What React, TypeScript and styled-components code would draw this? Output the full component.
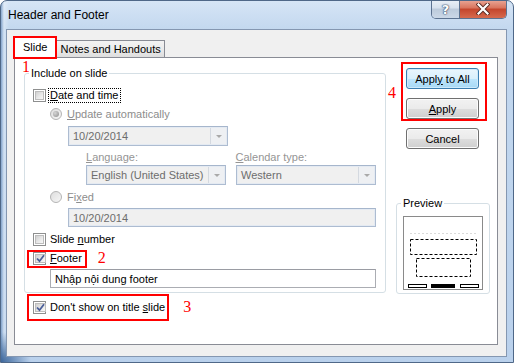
import React from 'react';
import styled, { createGlobalStyle } from 'styled-components';

const GlobalStyle = createGlobalStyle`
  html, body {
    margin: 0;
    padding: 0;
    background: #ffffff;
  }
  body {
    font-family: "Liberation Sans", Arial, sans-serif;
    font-size: 11px;
    color: #000;
  }
  * {
    box-sizing: border-box;
  }
`;

const Window = styled.div`
  width: 514px;
  height: 363px;
  display: flex;
  flex-direction: column;
  border: 1px solid #4f6888;
  border-radius: 7px 7px 0 0;
  overflow: hidden;
  background:
    radial-gradient(circle at 0 100%, #3d679c 0, rgba(61, 103, 156, 0) 30px),
    linear-gradient(90deg, rgba(90, 130, 180, 0.6) 0, rgba(255, 255, 255, 0.3) 3px, rgba(255, 255, 255, 0) 8px),
    linear-gradient(180deg, #d6e5f6 0, #c3d8ef 28px, #bad1ec 100%);
`;

const TitleBar = styled.div`
  height: 28px;
  display: flex;
  align-items: flex-start;
`;

const Title = styled.div`
  flex: 1;
  padding-left: 7px;
  line-height: 28px;
  font-size: 12px;
  color: #000;
`;

const CaptionGroup = styled.div`
  display: flex;
  height: 19px;
  margin-top: -1px;
  margin-right: 6px;
  border: 1px solid #5c7290;
  border-top: none;
  border-radius: 0 0 5px 5px;
  overflow: hidden;
`;

const HelpButton = styled.div`
  width: 28px;
  display: flex;
  align-items: center;
  justify-content: center;
  border-right: 1px solid #5c7290;
  background: linear-gradient(180deg, #eaf0f7 0, #d7e1ed 45%, #bccadb 50%, #cbd8e7 100%);
  font: bold 13px "DejaVu Sans", sans-serif;
  color: #ffffff;
  text-shadow: 0 0 1px #3a4e6d, 0 0 1px #3a4e6d, 0 0 2px #3a4e6d;
`;

const CloseButton = styled.div`
  width: 46px;
  display: flex;
  align-items: center;
  justify-content: center;
  background: linear-gradient(180deg, #eaa898 0, #d9735c 45%, #c4452c 50%, #d66a4e 100%);
`;

const Client = styled.div`
  flex: 1;
  display: flex;
  flex-direction: column;
  margin: 0 6px 5px 5px;
  padding: 7px 8px 11px 7px;
  background: #f0f0f0;
  border: 1px solid #8497b1;
`;

const TabStrip = styled.div`
  height: 20px;
  display: flex;
  align-items: flex-end;
`;

const Tab = styled.div<{ $active?: boolean; $marked?: boolean }>`
  position: relative;
  z-index: ${(p) => (p.$active ? 2 : 1)};
  height: ${(p) => (p.$active ? 21 : 17)}px;
  margin-bottom: ${(p) => (p.$active ? -1 : 0)}px;
  padding: ${(p) => (p.$active ? '3px 8px 0 8px' : '2px 3px 0 4px')};
  border: 1px solid #898c95;
  border-bottom: none;
  border-left-width: ${(p) => (p.$active ? 1 : 0)}px;
  background: ${(p) => (p.$active ? '#ffffff' : 'linear-gradient(180deg, #f3f3f3 0, #ebebeb 50%, #dedede 100%)')};
  outline: ${(p) => (p.$marked ? '2px solid #ff0000' : 'none')};
  outline-offset: -1px;
  white-space: nowrap;
`;

const Panel = styled.div`
  position: relative;
  flex: 1;
  display: flex;
  background: #ffffff;
  border: 1px solid #898c95;
`;

const LeftCol = styled.div`
  width: 362px;
  margin-left: 9px;
  padding-top: 15px;
  display: flex;
  flex-direction: column;
`;

const RightCol = styled.div`
  flex: 1;
  padding-top: 4px;
  display: flex;
  flex-direction: column;
  align-items: flex-start;
`;

const Group = styled.div`
  position: relative;
  border: 1px solid #d5dfe5;
  border-radius: 3px;
  padding: 14px 0 4px 8px;
`;

const Legend = styled.div`
  position: absolute;
  top: -8px;
  left: 4px;
  padding: 0 2px;
  line-height: 14px;
  background: #ffffff;
`;

const Row = styled.div<{ $mt?: number; $ml?: number }>`
  display: flex;
  align-items: center;
  gap: 3px;
  height: 14px;
  margin-top: ${(p) => p.$mt ?? 0}px;
  margin-left: ${(p) => p.$ml ?? 0}px;
`;

const Label = styled.span<{ $disabled?: boolean; $focus?: boolean }>`
  color: ${(p) => (p.$disabled ? '#8d8d8d' : '#000000')};
  line-height: 13px;
  padding: 0 1px;
  outline: ${(p) => (p.$focus ? '1px dotted #000' : 'none')};
  white-space: nowrap;
`;

const BoxOuter = styled.span`
  width: 13px;
  height: 13px;
  flex: none;
  border: 1px solid #8e8f8f;
  background: #ffffff;
  padding: 1px;
  display: flex;
`;

const BoxInner = styled.span`
  flex: 1;
  display: flex;
  align-items: center;
  justify-content: center;
  background: linear-gradient(135deg, #cfcfcf 0, #e6e6e6 50%, #f8f8f8 100%);
  border: 1px solid #bdbdbd;
`;

const RadioOuter = styled.span`
  width: 12px;
  height: 12px;
  flex: none;
  border-radius: 50%;
  border: 1px solid #b4b4b4;
  background: linear-gradient(135deg, #dedede 0, #f6f6f6 100%);
  display: flex;
  align-items: center;
  justify-content: center;
  margin-right: 1px;
`;

const RadioDot = styled.span`
  width: 6px;
  height: 6px;
  border-radius: 50%;
  background: radial-gradient(circle at 35% 35%, #d5d5d5 0, #a3a3a3 70%);
`;

const Field = styled.div<{ $w: number; $ml?: number; $mt?: number; $h?: number; $enabled?: boolean }>`
  width: ${(p) => p.$w}px;
  height: ${(p) => p.$h ?? 20}px;
  margin-left: ${(p) => p.$ml ?? 0}px;
  margin-top: ${(p) => p.$mt ?? 0}px;
  display: flex;
  align-items: center;
  padding-left: 4px;
  border: 1px solid ${(p) => (p.$enabled ? '#abadb3' : '#adbcd1')};
  border-top-color: ${(p) => (p.$enabled ? '#9a9ca3' : '#a6b6cc')};
  background: ${(p) => (p.$enabled ? '#ffffff' : '#f0f0f0')};
  box-shadow: ${(p) => (p.$enabled ? 'none' : 'inset 0 0 0 1px #e4eaf2')};
  color: ${(p) => (p.$enabled ? '#000000' : '#6d6d6d')};
  white-space: nowrap;
`;

const FieldText = styled.span`
  flex: 1;
`;

const DropButton = styled.span`
  width: 16px;
  height: 16px;
  margin-right: 1px;
  display: flex;
  align-items: center;
  justify-content: center;
  border-left: 1px solid #d4d9e0;
  background: #eef0f3;
`;

const DropArrow = styled.span`
  width: 0;
  height: 0;
  border-left: 3px solid transparent;
  border-right: 3px solid transparent;
  border-top: 3px solid #a9a9a9;
`;

const FieldPair = styled.div`
  display: flex;
  gap: 10px;
  margin-top: 1px;
  margin-left: 53px;
`;

const LabelPair = styled.div`
  display: flex;
  height: 14px;
  align-items: center;
  margin-top: 4px;
  margin-left: 53px;
`;

const SmallLabel = styled.span`
  width: 150px;
  color: #959595;
`;

const Marked = styled.div<{ $t: number; $r: number; $b: number; $l: number }>`
  display: flex;
  align-items: center;
  gap: 3px;
  outline: 2px solid #ff0000;
  padding: ${(p) => `${p.$t}px ${p.$r}px ${p.$b}px ${p.$l}px`};
  margin: ${(p) => `-${p.$t}px -${p.$r}px -${p.$b}px -${p.$l}px`};
`;

const Note = styled.span<{ $ml?: number }>`
  font-family: "Liberation Serif", "Times New Roman", serif;
  font-size: 16px;
  line-height: 16px;
  color: #ff0000;
  margin-left: ${(p) => p.$ml ?? 0}px;
`;

const CornerNote = styled(Note)`
  position: absolute;
  left: 7px;
  top: 1px;
`;

const AnnotRow = styled.div`
  display: flex;
  align-items: center;
`;

const NoteSlot = styled.span`
  width: 15px;
  padding-left: 2px;
  padding-top: 3px;
`;

const ButtonBox = styled.div`
  display: flex;
  flex-direction: column;
  gap: 9px;
  border: 2px solid #ff0000;
  padding: 4px 6px 0 3px;
`;

const Button = styled.div<{ $default?: boolean; $ml?: number; $mt?: number }>`
  width: 73px;
  height: 21px;
  margin-left: ${(p) => p.$ml ?? 0}px;
  margin-top: ${(p) => p.$mt ?? 0}px;
  display: flex;
  align-items: center;
  justify-content: center;
  border-radius: 3px;
  border: 1px solid ${(p) => (p.$default ? '#3c7fb1' : '#707070')};
  box-shadow: inset 0 0 0 1px ${(p) => (p.$default ? '#cfeafb' : '#fcfcfc')};
  background: ${(p) =>
    p.$default
      ? 'linear-gradient(180deg, #eaf6fd 0, #d9f0fc 50%, #bee6fd 51%, #a7d9f5 100%)'
      : 'linear-gradient(180deg, #f2f2f2 0, #ebebeb 50%, #dddddd 51%, #cfcfcf 100%)'};
  color: #000;
`;

const PreviewGroup = styled.div`
  position: relative;
  width: 94px;
  margin-top: 54px;
  margin-left: 10px;
  padding: 12px 0 3px 6px;
  border: 1px solid #d5dfe5;
  border-radius: 3px;
`;

const PreviewBox = styled.div`
  width: 80px;
  height: 74px;
  border: 1px solid #8a8a8a;
  background: #ffffff;
  display: flex;
`;

const Checkbox: React.FC<{ checked?: boolean }> = ({ checked }) => (
  <BoxOuter>
    <BoxInner>
      {checked && (
        <svg width="9" height="9" viewBox="0 0 9 9">
          <path d="M1 4.5 L3.5 7.2 L8 1.2" fill="none" stroke="#4a5e99" strokeWidth="1.8" />
        </svg>
      )}
    </BoxInner>
  </BoxOuter>
);

const Radio: React.FC<{ checked?: boolean }> = ({ checked }) => (
  <RadioOuter>{checked && <RadioDot />}</RadioOuter>
);

const Select: React.FC<{ w: number; ml?: number; mt?: number; value: string }> = ({ w, ml, mt, value }) => (
  <Field $w={w} $ml={ml} $mt={mt}>
    <FieldText>{value}</FieldText>
    <DropButton>
      <DropArrow />
    </DropButton>
  </Field>
);

const App: React.FC = () => {
  return (
    <>
      <GlobalStyle />
      <Window>
        <TitleBar>
          <Title>Header and Footer</Title>
          <CaptionGroup>
            <HelpButton>?</HelpButton>
            <CloseButton>
              <svg width="14" height="12" viewBox="0 0 14 12">
                <path d="M2.5 1.5 L11.5 10.5 M11.5 1.5 L2.5 10.5" stroke="#5a2a22" strokeWidth="4" strokeLinecap="square" />
                <path d="M2.5 1.5 L11.5 10.5 M11.5 1.5 L2.5 10.5" stroke="#ffffff" strokeWidth="2.2" strokeLinecap="square" />
              </svg>
            </CloseButton>
          </CaptionGroup>
        </TitleBar>

        <Client>
          <TabStrip>
            <Tab $active $marked>Slide</Tab>
            <Tab>Notes and Handouts</Tab>
          </TabStrip>

          <Panel>
            <CornerNote>1</CornerNote>
            <LeftCol>
              <Group>
                <Legend>Include on slide</Legend>
                <Row>
                  <Checkbox />
                  <Label $focus>
                    <u>D</u>ate and time
                  </Label>
                </Row>
                <Row $mt={5} $ml={17}>
                  <Radio checked />
                  <Label $disabled>
                    <u>U</u>pdate automatically
                  </Label>
                </Row>
                <Select w={160} ml={35} mt={5} value="10/20/2014" />
                <LabelPair>
                  <SmallLabel>
                    <u>L</u>anguage:
                  </SmallLabel>
                  <SmallLabel>
                    <u>C</u>alendar type:
                  </SmallLabel>
                </LabelPair>
                <FieldPair>
                  <Select w={140} value="English (United States)" />
                  <Select w={140} value="Western" />
                </FieldPair>
                <Row $mt={5} $ml={17}>
                  <Radio />
                  <Label $disabled>
                    Fi<u>x</u>ed
                  </Label>
                </Row>
                <Field $w={308} $h={19} $ml={35} $mt={4}>
                  10/20/2014
                </Field>
                <Row $mt={5}>
                  <Checkbox />
                  <Label>
                    Slide <u>n</u>umber
                  </Label>
                </Row>
                <Row $mt={5}>
                  <Marked $t={0} $r={2} $b={1} $l={4}>
                    <Checkbox checked />
                    <Label>
                      <u>F</u>ooter
                    </Label>
                  </Marked>
                  <Note $ml={12}>2</Note>
                </Row>
                <Field $w={326} $h={19} $ml={17} $mt={4} $enabled>
                  Nhập nội dung footer
                </Field>
              </Group>
              <Row $mt={7} $ml={9}>
                <Marked $t={5} $r={1} $b={5} $l={4}>
                  <Checkbox checked />
                  <Label>
                    Don't show on title <u>s</u>lide
                  </Label>
                </Marked>
                <Note $ml={14}>3</Note>
              </Row>
            </LeftCol>

            <RightCol>
              <AnnotRow>
                <NoteSlot>
                  <Note>4</Note>
                </NoteSlot>
                <ButtonBox>
                  <Button $default>
                    Appl<u>y</u>&nbsp;to All
                  </Button>
                  <Button>
                    <u>A</u>pply
                  </Button>
                </ButtonBox>
              </AnnotRow>
              <Button $ml={20} $mt={7}>
                Cancel
              </Button>
              <PreviewGroup>
                <Legend>Preview</Legend>
                <PreviewBox>
                  <svg width="78" height="72" viewBox="0 0 78 72">
                    <line x1="6" y1="16.5" x2="72" y2="16.5" stroke="#dadada" strokeDasharray="2 2" />
                    <rect x="6.5" y="22.5" width="66" height="15" fill="none" stroke="#000" strokeDasharray="3 2" />
                    <rect x="12.5" y="41.5" width="54" height="18" fill="none" stroke="#000" strokeDasharray="3 2" />
                    <rect x="4.5" y="67.5" width="18" height="3" fill="#fff" stroke="#000" />
                    <rect x="27" y="67" width="24" height="4" fill="#000" />
                    <rect x="56.5" y="67.5" width="18" height="3" fill="#fff" stroke="#000" />
                  </svg>
                </PreviewBox>
              </PreviewGroup>
            </RightCol>
          </Panel>
        </Client>
      </Window>
    </>
  );
};

export default App;
